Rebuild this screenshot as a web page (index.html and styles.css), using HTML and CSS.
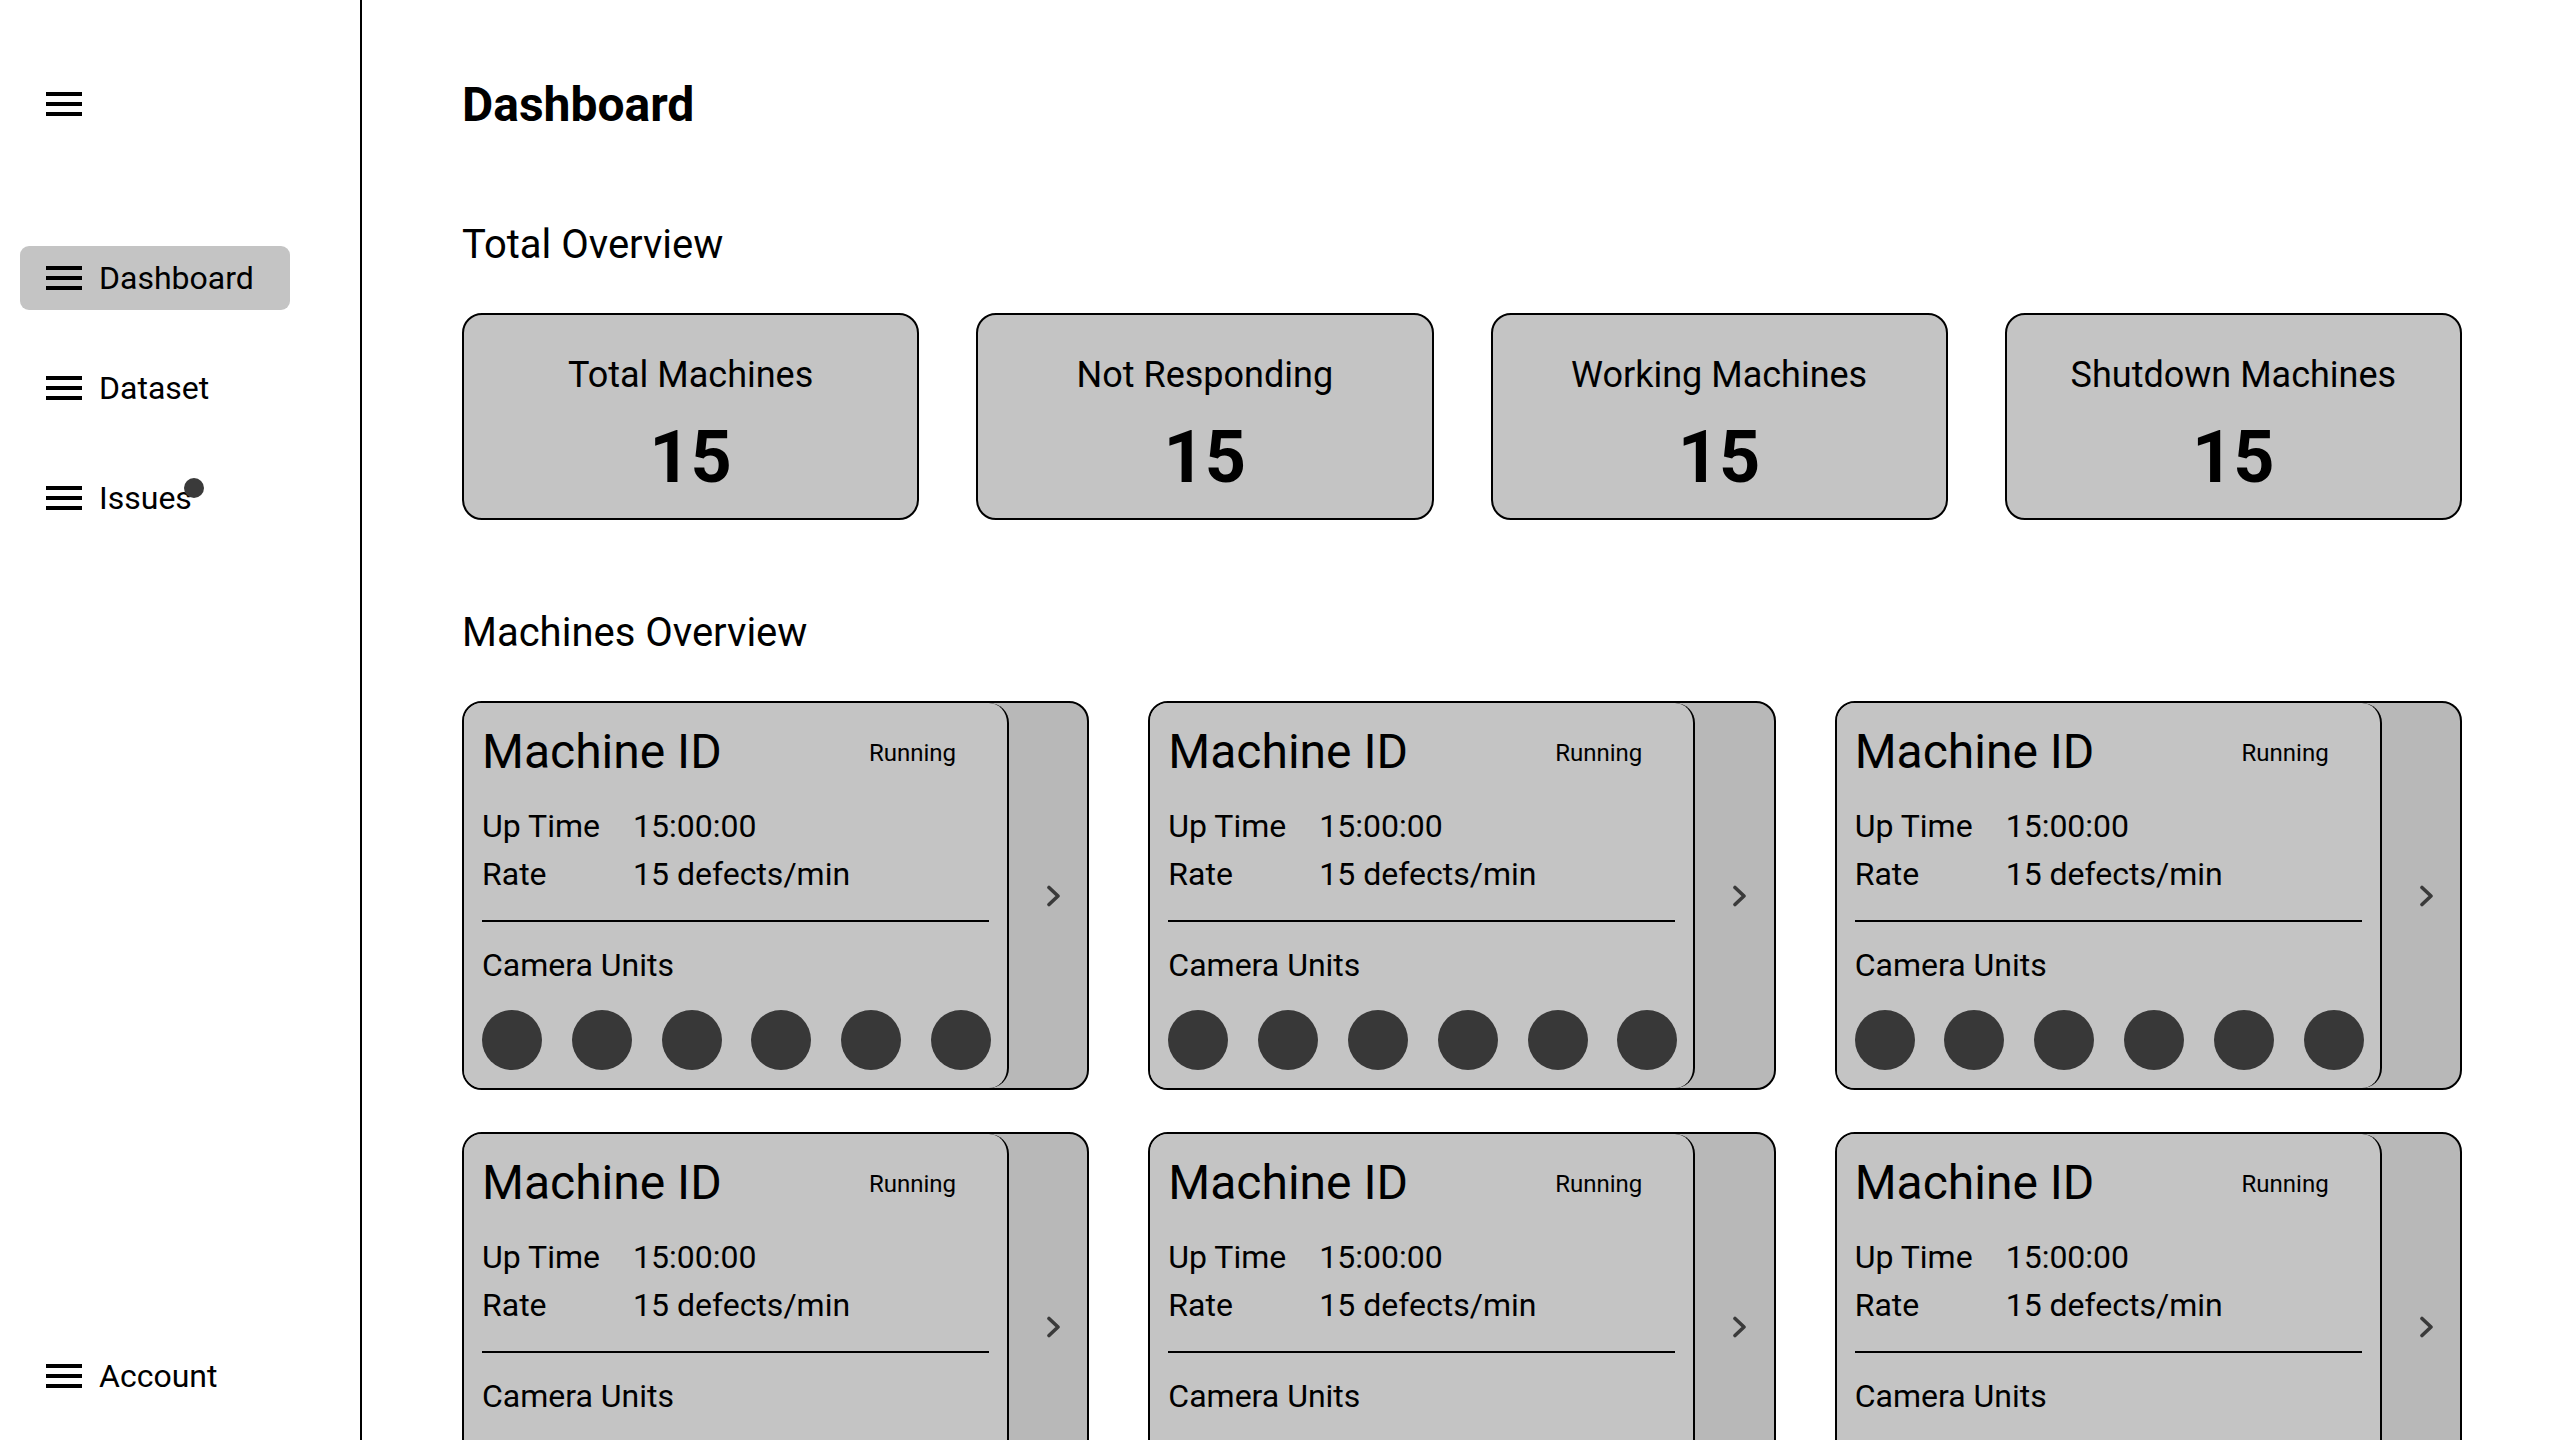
FILE: index.html
```html
<!DOCTYPE html>
<html lang="en">
<head>
<meta charset="utf-8">
<title>Dashboard</title>
<link rel="stylesheet" href="styles.css">
</head>
<body>
<aside class="sidebar">
  <div class="menu-toggle">
    <svg class="burger" viewBox="0 0 36 24" width="36" height="24"><rect x="0" y="0" width="36" height="4"/><rect x="0" y="10" width="36" height="4"/><rect x="0" y="20" width="36" height="4"/></svg>
  </div>
  <nav class="nav">
    <a class="nav-item active"><svg class="burger" viewBox="0 0 36 24" width="36" height="24"><rect x="0" y="0" width="36" height="4"/><rect x="0" y="10" width="36" height="4"/><rect x="0" y="20" width="36" height="4"/></svg><span class="nav-label">Dashboard</span></a>
    <a class="nav-item"><svg class="burger" viewBox="0 0 36 24" width="36" height="24"><rect x="0" y="0" width="36" height="4"/><rect x="0" y="10" width="36" height="4"/><rect x="0" y="20" width="36" height="4"/></svg><span class="nav-label">Dataset</span></a>
    <a class="nav-item"><svg class="burger" viewBox="0 0 36 24" width="36" height="24"><rect x="0" y="0" width="36" height="4"/><rect x="0" y="10" width="36" height="4"/><rect x="0" y="20" width="36" height="4"/></svg><span class="nav-label">Issues<span class="dot"></span></span></a>
  </nav>
  <a class="nav-item account"><svg class="burger" viewBox="0 0 36 24" width="36" height="24"><rect x="0" y="0" width="36" height="4"/><rect x="0" y="10" width="36" height="4"/><rect x="0" y="20" width="36" height="4"/></svg><span class="nav-label">Account</span></a>
</aside>

<main class="main">
  <h1 class="page-title">Dashboard</h1>

  <h2 class="section-title first">Total Overview</h2>
  <div class="stats">
    <div class="stat"><div class="stat-label">Total Machines</div><div class="stat-value">15</div></div>
    <div class="stat"><div class="stat-label">Not Responding</div><div class="stat-value">15</div></div>
    <div class="stat"><div class="stat-label">Working Machines</div><div class="stat-value">15</div></div>
    <div class="stat"><div class="stat-label">Shutdown Machines</div><div class="stat-value">15</div></div>
  </div>

  <h2 class="section-title">Machines Overview</h2>
  <div class="machines" id="machines"></div>
</main>

<template id="machine-tpl">
  <div class="machine">
    <div class="machine-body">
      <div class="machine-head"><span class="machine-id">Machine ID</span><span class="machine-status">Running</span></div>
      <div class="machine-info">
        <span class="info-label">Up Time</span><span class="info-value">15:00:00</span>
        <span class="info-label">Rate</span><span class="info-value">15 defects/min</span>
      </div>
      <div class="divider"></div>
      <div class="cam-title">Camera Units</div>
      <div class="cams"><span class="cam"></span><span class="cam"></span><span class="cam"></span><span class="cam"></span><span class="cam"></span><span class="cam"></span></div>
    </div>
    <div class="machine-more">
      <svg viewBox="0 0 16 22" width="16" height="22"><path d="M3 2.5 L12 11 L3 19.5" fill="none" stroke="#3a3a3a" stroke-width="3.6" stroke-linecap="round" stroke-linejoin="round"/></svg>
    </div>
  </div>
</template>

<script>
  const tpl = document.getElementById('machine-tpl');
  const box = document.getElementById('machines');
  for (let i = 0; i < 6; i++) box.appendChild(tpl.content.cloneNode(true));
</script>
</body>
</html>
```

FILE: styles.css
```css
* { box-sizing: border-box; }

html, body {
  margin: 0;
  height: 100%;
}

body {
  display: flex;
  height: 100vh;
  overflow: hidden;
  background: #ffffff;
  color: #000000;
  font-family: Roboto, "Noto Sans", "Liberation Sans", sans-serif;
}

/* ---------- Sidebar ---------- */
.sidebar {
  flex: 0 0 362px;
  height: 100vh;
  border-right: 2px solid #000;
  display: flex;
  flex-direction: column;
  padding: 72px 70px 32px 20px;
}

.menu-toggle {
  height: 64px;
  display: flex;
  align-items: center;
  padding-left: 26px;
}

.burger { display: block; fill: #000; flex: 0 0 auto; }

.nav {
  display: flex;
  flex-direction: column;
  gap: 46px;
  margin-top: 110px;
}

.nav-item {
  height: 64px;
  display: flex;
  align-items: center;
  gap: 17px;
  padding-left: 26px;
  border-radius: 9px;
  font-size: 32px;
  line-height: 1;
  color: #000;
}

.nav-item.active { background: #c4c4c4; }

.nav-label { position: relative; }

.dot {
  position: absolute;
  right: -12px;
  top: -4px;
  width: 20px;
  height: 20px;
  border-radius: 50%;
  background: #3a3a3a;
}

.account { margin-top: auto; }

/* ---------- Main ---------- */
.main {
  flex: 1 1 auto;
  padding: 81px 98px 0 100px;
  min-width: 0;
}

.page-title {
  margin: 0;
  font-size: 48px;
  line-height: 1;
  font-weight: 700;
}

.section-title {
  margin: 93px 0 48px;
  font-size: 40px;
  line-height: 1;
  font-weight: 400;
}

.section-title.first { margin-top: 96px; }

.stats {
  display: grid;
  grid-template-columns: repeat(4, 1fr);
  gap: 57px;
  width: 2000px;
}

.stat {
  height: 207px;
  background: #c4c4c4;
  border: 2px solid #000;
  border-radius: 20px;
  display: flex;
  flex-direction: column;
  align-items: center;
  padding-top: 42px;
  gap: 29px;
}

.stat-label { font-size: 36px; line-height: 1; }

.stat-value { font-size: 72px; line-height: 1; font-weight: 700; }

/* ---------- Machine cards ---------- */
.machines {
  display: grid;
  grid-template-columns: repeat(3, 1fr);
  column-gap: 59px;
  row-gap: 42px;
  width: 2000px;
}

.machine {
  display: flex;
  height: 389px;
  background: #b8b8b8;
  border: 2px solid #000;
  border-radius: 20px;
  overflow: hidden;
}

.machine-body {
  flex: 0 0 545px;
  background: #c4c4c4;
  border-right: 2px solid #000;
  border-radius: 0 20px 20px 0;
  padding: 25px 16px 18px 18px;
  display: flex;
  flex-direction: column;
}

.machine-head {
  display: flex;
  justify-content: space-between;
  align-items: flex-start;
}

.machine-id { font-size: 48px; line-height: 1; }

.machine-status {
  font-size: 24px;
  line-height: 1;
  margin-top: 13px;
  margin-right: 35px;
}

.machine-info {
  display: grid;
  grid-template-columns: 151px 1fr;
  row-gap: 16px;
  margin-top: 34px;
  font-size: 32px;
  line-height: 1;
}

.divider {
  height: 2px;
  background: #000;
  margin-top: 30px;
  margin-right: 2px;
}

.cam-title {
  margin-top: 27px;
  font-size: 32px;
  line-height: 1;
}

.cams {
  display: flex;
  justify-content: space-between;
  margin-top: 29px;
}

.cam {
  width: 60px;
  height: 60px;
  border-radius: 50%;
  background: #383838;
}

.machine-more {
  flex: 1 1 auto;
  display: flex;
  align-items: center;
  justify-content: center;
  padding-left: 12px;
}

.machine-more svg { display: block; }
```
